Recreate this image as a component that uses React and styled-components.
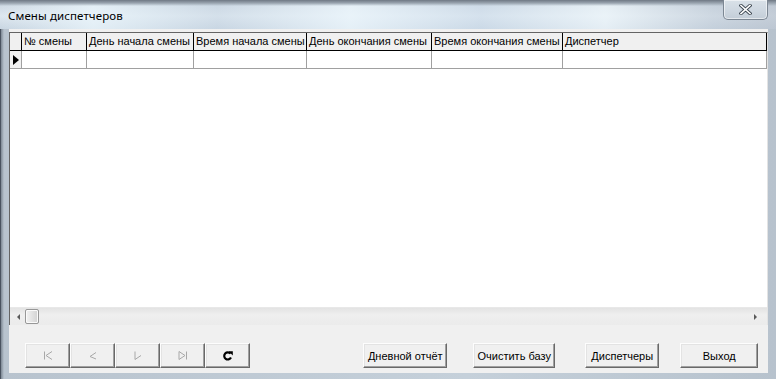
import React from 'react';
import styled, { createGlobalStyle } from 'styled-components';

const GlobalStyle = createGlobalStyle`
  html, body {
    margin: 0;
    padding: 0;
    overflow: hidden;
    background: #9aa6b2;
  }
`;

const Window = styled.div`
  width: 776px;
  height: 379px;
  box-sizing: border-box;
  display: flex;
  flex-direction: column;
  padding: 0 8px 6px 8px;
  border-left: 1px solid #4a5360;
  background:
    linear-gradient(90deg, #7d8894 0px, #b8c3ce 3px, #c5d0da 60%, #b7c2cd 100%);
  font-family: 'Liberation Sans', Arial, sans-serif;
`;

const TitleBar = styled.div`
  height: 29px;
  flex: none;
  margin: 0 -8px 0 -9px;
  padding-left: 8px;
  display: flex;
  align-items: flex-start;
  justify-content: space-between;
  background:
    linear-gradient(180deg, #6f7884 0px, #98a3ae 3px, rgba(255,255,255,0) 6px),
    linear-gradient(90deg, rgba(255,255,255,0) 0%, rgba(235,246,252,0.75) 12%, rgba(200,214,228,0.4) 28%, rgba(236,246,252,0.8) 45%, rgba(205,220,235,0.5) 62%, rgba(240,248,252,0.7) 78%, rgba(190,200,212,0.5) 92%, rgba(180,188,200,0.6) 100%),
    linear-gradient(180deg, #c8d3de 0%, #dde7ef 55%, #c9d6e2 100%);
`;

const Title = styled.div`
  font-family: 'Noto Sans', 'Open Sans', sans-serif;
  font-size: 11.5px;
  color: #000;
  padding-top: 8px;
  letter-spacing: 0.1px;
`;

const CloseButton = styled.div`
  width: 45px;
  height: 20px;
  margin-right: 8px;
  box-sizing: border-box;
  border: 1px solid #7c8793;
  border-top: none;
  border-radius: 0 0 5px 5px;
  background: linear-gradient(180deg, #d9e1e8 0%, #cfd8e1 50%, #c3cdd7 100%);
  box-shadow: inset 0 0 0 1px rgba(255,255,255,0.55);
  display: flex;
  align-items: center;
  justify-content: center;
`;

const Client = styled.div`
  flex: 1;
  background: #f0f0f0;
  display: flex;
  flex-direction: column;
  padding: 3px 0 0 0;
  min-height: 0;
`;

const Grid = styled.div`
  height: 293px;
  box-sizing: border-box;
  background: #fff;
  border-top: 1px solid #646464;
  border-left: 1px solid #646464;
  border-right: 1px solid #e3e3e3;
  display: flex;
  flex-direction: column;
`;

const GridBody = styled.div`
  flex: 1;
  min-height: 0;
`;

const Row = styled.div`
  display: flex;
  height: 18px;
  box-sizing: border-box;
  background: ${p => (p.$header ? '#f0f0f0' : '#fff')};
  border-bottom: 1px solid ${p => (p.$header ? '#000' : '#a0a0a0')};
`;

const Cell = styled.div`
  width: ${p => p.$w}px;
  flex: ${p => (p.$grow ? 1 : 'none')};
  box-sizing: border-box;
  font-size: 11px;
  line-height: 17px;
  padding-left: 2px;
  white-space: nowrap;
  overflow: hidden;
  color: #000;
  border-right: 1px solid ${p => (p.$header ? '#000' : '#a0a0a0')};
  background: ${p => (p.$indicator ? '#f0f0f0' : 'transparent')};
  display: flex;
  align-items: center;
`;

const Pointer = styled.span`
  width: 0;
  height: 0;
  border-top: 5px solid transparent;
  border-bottom: 5px solid transparent;
  border-left: 6px solid #000;
  margin-left: 1px;
`;

const ScrollBar = styled.div`
  height: 17px;
  flex: none;
  background: linear-gradient(180deg, #e3e3e3 0%, #efefef 40%, #ebebeb 100%);
  border-top: 1px solid #e8e8e8;
  display: flex;
  align-items: center;
  padding: 0 4px;
  gap: 5px;
`;

const ScrollArrow = styled.span`
  width: 0;
  height: 0;
  border-top: 3px solid transparent;
  border-bottom: 3px solid transparent;
  ${p => (p.$right ? 'border-left: 3px solid #5a5a5a;' : 'border-right: 3px solid #5a5a5a;')}
  margin-left: ${p => (p.$right ? 'auto' : '3px')};
  margin-right: ${p => (p.$right ? '6px' : '0')};
`;

const Thumb = styled.div`
  width: 14px;
  height: 15px;
  box-sizing: border-box;
  border: 1px solid #979797;
  border-radius: 2px;
  background: linear-gradient(90deg, #f2f2f2 0%, #e2e2e2 50%, #d2d2d2 100%);
  box-shadow: inset 0 0 0 1px #fafafa;
`;

const ButtonBar = styled.div`
  display: flex;
  align-items: flex-start;
  padding: 18px 10px 0 16px;
`;

const NavGroup = styled.div`
  display: flex;
`;

const Button = styled.button`
  height: 25px;
  width: ${p => p.$w}px;
  box-sizing: border-box;
  margin: 0;
  margin-left: ${p => p.$ml || 0}px;
  padding: 0;
  background: #f0f0f0;
  border: 1px solid;
  border-color: #fdfdfd #696969 #696969 #fdfdfd;
  box-shadow: inset -1px -1px 0 #a0a0a0, inset 1px 1px 0 #e3e3e3;
  font-family: 'Liberation Sans', Arial, sans-serif;
  font-size: 11px;
  color: #000;
  display: flex;
  align-items: center;
  justify-content: center;
  cursor: default;
`;

const columns = [
  { w: 12, title: '', indicator: true },
  { w: 65, title: '№ смены' },
  { w: 107, title: 'День начала смены' },
  { w: 113, title: 'Время начала смены' },
  { w: 125, title: 'День окончания смены' },
  { w: 131, title: 'Время окончания смены' },
  { w: 0, title: 'Диспетчер', grow: true },
];

const NavIcon = ({ kind }) => {
  const stroke = '#a8a8a8';
  if (kind === 'refresh') {
    return (
      <svg width="12" height="12" viewBox="0 0 12 12">
        <path d="M8.6 3.6 A3.6 3.6 0 1 0 9 7.6" fill="none" stroke="#000" strokeWidth="2.2" />
        <path d="M6.6 1.2 L10.8 1.2 L10.8 5.4 Z" fill="#000" />
      </svg>
    );
  }
  const paths = {
    first: 'M2.5 1.5 V9.5 M10 1.5 L4 5.5 L10 9.5',
    prev: 'M9 2.5 L3 6.5 L9 9',
    next: 'M3 1.5 V9.5 L9 5.5',
    last: 'M2 1.5 V9.5 L8 5.5 L2 1.5 M9.5 1.5 V9.5',
  };
  return (
    <svg width="12" height="11" viewBox="0 0 12 11">
      <path d={paths[kind]} fill="none" stroke={stroke} strokeWidth="1" />
    </svg>
  );
};

function App() {
  return (
    <>
      <GlobalStyle />
      <Window>
        <TitleBar>
          <Title>Смены диспетчеров</Title>
          <CloseButton>
            <svg width="13" height="11" viewBox="0 0 13 11">
              <path d="M2 1.5 L11 9.5 M11 1.5 L2 9.5" stroke="#3c4650" strokeWidth="3.4" strokeLinecap="square" />
              <path d="M2 1.5 L11 9.5 M11 1.5 L2 9.5" stroke="#fff" strokeWidth="1.6" strokeLinecap="square" />
            </svg>
          </CloseButton>
        </TitleBar>
        <Client>
          <Grid>
            <GridBody>
              <Row $header>
                {columns.map((c, i) => (
                  <Cell key={i} $w={c.w} $grow={c.grow} $header>
                    {c.title}
                  </Cell>
                ))}
              </Row>
              <Row>
                {columns.map((c, i) => (
                  <Cell key={i} $w={c.w} $grow={c.grow} $indicator={c.indicator}>
                    {c.indicator && <Pointer />}
                  </Cell>
                ))}
              </Row>
            </GridBody>
            <ScrollBar>
              <ScrollArrow />
              <Thumb />
              <ScrollArrow $right />
            </ScrollBar>
          </Grid>
          <ButtonBar>
            <NavGroup>
              <Button $w={45}><NavIcon kind="first" /></Button>
              <Button $w={45}><NavIcon kind="prev" /></Button>
              <Button $w={45}><NavIcon kind="next" /></Button>
              <Button $w={45}><NavIcon kind="last" /></Button>
              <Button $w={45}><NavIcon kind="refresh" /></Button>
            </NavGroup>
            <Button $w={85} $ml={113}>Дневной отчёт</Button>
            <Button $w={82} $ml={26}>Очистить базу</Button>
            <Button $w={75} $ml={30}>Диспетчеры</Button>
            <Button $w={78} $ml={21}>Выход</Button>
          </ButtonBar>
        </Client>
      </Window>
    </>
  );
}

export default App;
